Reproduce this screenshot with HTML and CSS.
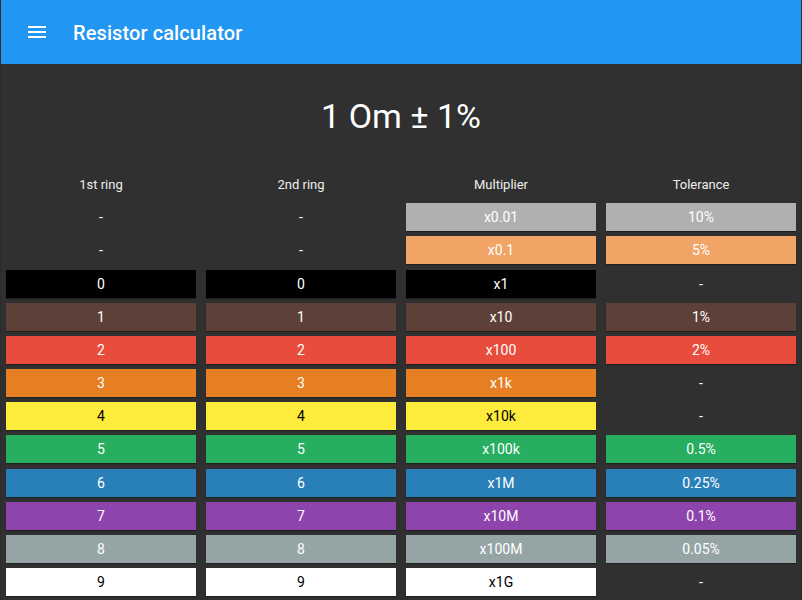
FILE: index.html
```html
<!DOCTYPE html>
<html>
<head>
<meta charset="utf-8">
<link rel="stylesheet" href="styles.css">
</head>
<body>
<div class="app">
  <header class="bar">
    <svg class="menu" width="24" height="24" viewBox="0 0 24 24"><path d="M3 18h18v-2H3v2zm0-5h18v-2H3v2zm0-7v2h18V6H3z" fill="#fff"/></svg>
    <span class="bar-title">Resistor calculator</span>
  </header>
  <div class="result">1 Om ± 1%</div>
  <div class="grid">
    <div class="head">1st ring</div>
    <div class="head">2nd ring</div>
    <div class="head">Multiplier</div>
    <div class="head">Tolerance</div>

    <div class="cell">-</div><div class="cell">-</div><div class="cell c-silver">x0.01</div><div class="cell c-silver">10%</div>
    <div class="cell">-</div><div class="cell">-</div><div class="cell c-gold">x0.1</div><div class="cell c-gold">5%</div>
    <div class="cell c-black">0</div><div class="cell c-black">0</div><div class="cell c-black">x1</div><div class="cell">-</div>
    <div class="cell c-brown">1</div><div class="cell c-brown">1</div><div class="cell c-brown">x10</div><div class="cell c-brown">1%</div>
    <div class="cell c-red">2</div><div class="cell c-red">2</div><div class="cell c-red">x100</div><div class="cell c-red">2%</div>
    <div class="cell c-orange">3</div><div class="cell c-orange">3</div><div class="cell c-orange">x1k</div><div class="cell">-</div>
    <div class="cell c-yellow">4</div><div class="cell c-yellow">4</div><div class="cell c-yellow">x10k</div><div class="cell">-</div>
    <div class="cell c-green">5</div><div class="cell c-green">5</div><div class="cell c-green">x100k</div><div class="cell c-green">0.5%</div>
    <div class="cell c-blue">6</div><div class="cell c-blue">6</div><div class="cell c-blue">x1M</div><div class="cell c-blue">0.25%</div>
    <div class="cell c-violet">7</div><div class="cell c-violet">7</div><div class="cell c-violet">x10M</div><div class="cell c-violet">0.1%</div>
    <div class="cell c-grey">8</div><div class="cell c-grey">8</div><div class="cell c-grey">x100M</div><div class="cell c-grey">0.05%</div>
    <div class="cell c-white">9</div><div class="cell c-white">9</div><div class="cell c-white">x1G</div><div class="cell">-</div>
  </div>
</div>
</body>
</html>
```
FILE: styles.css
```css
html, body {
  margin: 0;
  padding: 0;
  background: #2c2c2c;
  font-family: Roboto, "Noto Sans", sans-serif;
  color: #fff;
}
.app {
  width: 800px;
  height: 600px;
  margin: 0 1px;
  background: #303030;
  overflow: hidden;
}
.bar {
  height: 64px;
  background: #2196f3;
  display: flex;
  align-items: center;
  padding-left: 24px;
  padding-top: 2px;
  box-sizing: border-box;
}
.menu {
  display: block;
  margin-top: -2px;
}
.bar-title {
  margin-left: 24px;
  font-size: 20px;
  font-weight: 500;
  letter-spacing: 0.1px;
}
.result {
  margin-top: 30px;
  height: 44px;
  line-height: 44px;
  text-align: center;
  font-size: 34px;
  font-weight: 400;
}
.grid {
  margin-top: 37px;
  display: grid;
  grid-template-columns: repeat(4, 190px);
  column-gap: 10px;
  row-gap: 5.18px;
  padding: 0 5px;
}
.head {
  height: 20px;
  line-height: 20px;
  text-align: center;
  font-size: 13px;
  color: #eee;
  margin-bottom: 3px;
}
.cell {
  height: 28px;
  line-height: 28px;
  text-align: center;
  font-size: 14px;
  color: #fff;
}
.c-silver, .c-gold, .c-black, .c-brown, .c-red, .c-orange, .c-yellow,
.c-green, .c-blue, .c-violet, .c-grey, .c-white {
  box-shadow: 0 1px 1px rgba(0, 0, 0, 0.35);
}
.c-silver { background: #b0b0b0; }
.c-gold { background: #f0a466; }
.c-black { background: #000; }
.c-brown { background: #5d4037; }
.c-red { background: #e74c3c; }
.c-orange { background: #e67e22; }
.c-yellow { background: #ffeb3b; color: #000; }
.c-green { background: #27ae60; }
.c-blue { background: #2980b9; }
.c-violet { background: #8e44ad; }
.c-grey { background: #95a5a6; }
.c-white { background: #fff; color: #000; }
```
